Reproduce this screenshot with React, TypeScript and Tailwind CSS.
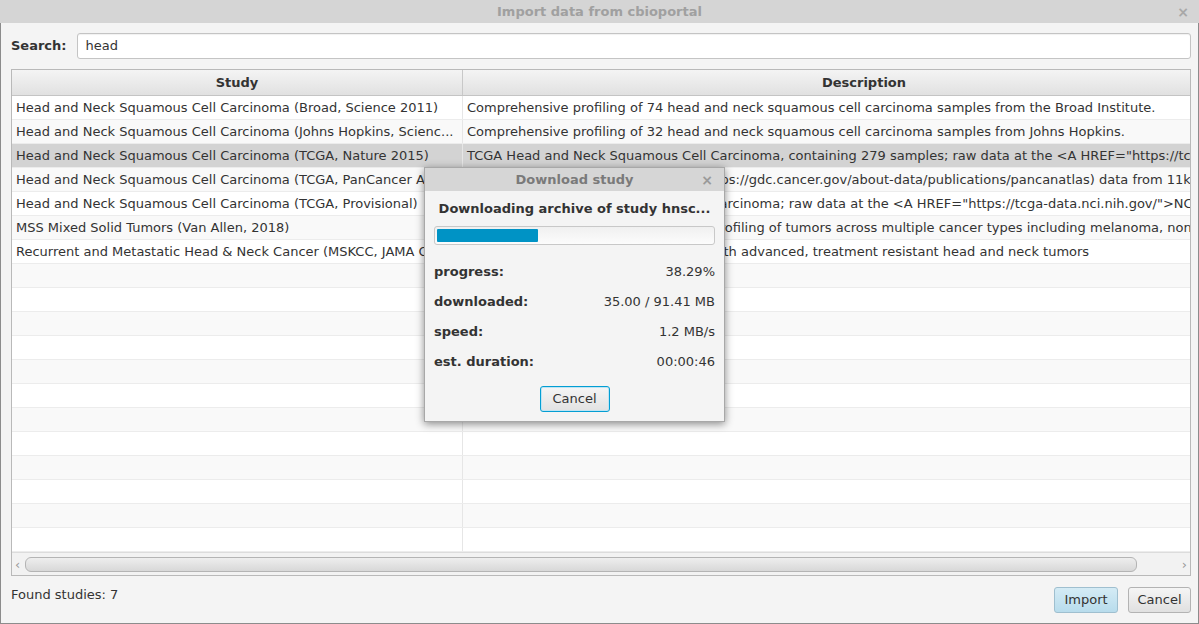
import React from 'react'

const STUDIES = [
  {
    name: 'Head and Neck Squamous Cell Carcinoma (Broad, Science 2011)',
    desc: 'Comprehensive profiling of 74 head and neck squamous cell carcinoma samples from the Broad Institute.',
  },
  {
    name: 'Head and Neck Squamous Cell Carcinoma (Johns Hopkins, Scienc...',
    desc: 'Comprehensive profiling of 32 head and neck squamous cell carcinoma samples from Johns Hopkins.',
  },
  {
    name: 'Head and Neck Squamous Cell Carcinoma (TCGA, Nature 2015)',
    desc: 'TCGA Head and Neck Squamous Cell Carcinoma, containing 279 samples; raw data at the <A HREF="https://tcga-data.nci.nih.gov/">NCI</A>.',
  },
  {
    name: 'Head and Neck Squamous Cell Carcinoma (TCGA, PanCancer Atlas)',
    desc: 'Comprehensive TCGA PanCanAtlas (https://gdc.cancer.gov/about-data/publications/pancanatlas) data from 11k samples.',
  },
  {
    name: 'Head and Neck Squamous Cell Carcinoma (TCGA, Provisional)',
    desc: 'TCGA Head and Neck Squamous Cell Carcinoma; raw data at the <A HREF="https://tcga-data.nci.nih.gov/">NCI</A>.',
  },
  {
    name: 'MSS Mixed Solid Tumors (Van Allen, 2018)',
    desc: 'Whole exome sequencing and mRNA profiling of tumors across multiple cancer types including melanoma, non-small cell lung cancer.',
  },
  {
    name: 'Recurrent and Metastatic Head & Neck Cancer (MSKCC, JAMA Oncol 2016)',
    desc: 'Targeted sequencing of 151 patients with advanced, treatment resistant head and neck tumors',
  },
]

const EMPTY_ROWS = 12

const font = "font-['DejaVu_Sans','Open_Sans',sans-serif]"

function Row({ index, name, desc }: { index: number; name?: string; desc?: string }) {
  const selected = index === 2
  const bg = selected ? 'bg-[#d3d3d3]' : index % 2 === 0 ? 'bg-white' : 'bg-[#f9f9f9]'
  return (
    <div className={`flex h-6 shrink-0 border-b border-[#ececec] ${bg}`}>
      <div className="w-[451px] shrink-0 truncate border-r border-[#e6e6e6] pl-[4px] leading-[23px] whitespace-nowrap">
        {name}
      </div>
      <div className="w-[802px] shrink-0 overflow-hidden pl-[4px] leading-[23px] whitespace-nowrap">{desc}</div>
    </div>
  )
}

function DownloadDialog() {
  const stats = [
    ['progress:', '38.29%'],
    ['downloaded:', '35.00 / 91.41 MB'],
    ['speed:', '1.2 MB/s'],
    ['est. duration:', '00:00:46'],
  ]
  return (
    <div className="absolute left-[424px] top-[167px] flex w-[301px] flex-col border border-[#a8a8a8] bg-[#f4f4f4] shadow-[0_2px_8px_rgba(0,0,0,0.45)]">
      <div className="relative flex h-[23px] items-center justify-center bg-[#d6d6d6]">
        <span className="text-[13px] font-bold text-[#7a7a7a]">Download study</span>
        <span className="absolute right-[11px] top-[2px] text-[14px] font-bold text-[#9a9a9a]">×</span>
      </div>
      <div className="flex flex-col px-[9px] pt-[8px] pb-[9px]">
        <div className="text-center text-[13px] font-bold whitespace-nowrap text-[#333]">Downloading archive of study hnsc...</div>
        <div className="mt-[7px] h-[19px] rounded-[3px] border border-[#c8c8c8] bg-gradient-to-b from-[#f0f0f0] to-[#fcfcfc] p-[2px]">
          <div className="h-full w-[36.9%] rounded-[1px] bg-[#0093c5]" />
        </div>
        <div className="mt-[18px] flex flex-col gap-[12px]">
          {stats.map(([k, v]) => (
            <div key={k} className="flex h-[18px] items-center justify-between text-[13px] text-[#333]">
              <span className="font-bold">{k}</span>
              <span>{v}</span>
            </div>
          ))}
        </div>
        <div className="mt-[15px] flex justify-center">
          <button className="h-[26px] w-[70px] rounded-[3px] border border-[#039ed3] bg-gradient-to-b from-[#f5f5f5] to-[#e2e2e2] text-[13px] text-[#333] shadow-[inset_0_0_0_1px_#bfe4f3]">
            Cancel
          </button>
        </div>
      </div>
    </div>
  )
}

export default function App() {
  return (
    <div className={`relative flex h-[624px] w-[1199px] flex-col overflow-hidden bg-[#f4f4f4] text-[13px] text-[#333] ${font}`}>
      <div className="relative flex h-[23px] shrink-0 items-center justify-center bg-[#d5d5d5]">
        <span className="text-[13px] font-bold text-[#a0a0a0]">Import data from cbioportal</span>
        <span className="absolute right-[10px] top-[2px] text-[14px] font-bold text-[#a8a8a8]">×</span>
      </div>
      <div className="flex flex-1 flex-col border-x border-b border-[#8c8c8c] pl-[10px] pr-[7px] pb-[9px]">
        <div className="mt-[10px] flex items-center gap-[10px]">
          <span className="font-bold">Search:</span>
          <div className="flex h-[26px] flex-1 items-center rounded-[3px] border border-[#c4c4c4] bg-white pl-[8px] shadow-[inset_0_1px_1px_rgba(0,0,0,0.06)]">
            head
          </div>
        </div>
        <div className="mt-[10px] flex h-[507px] flex-col overflow-hidden border border-[#b9b9b9] bg-white">
          <div className="flex h-[26px] shrink-0 border-b border-[#c4c4c4] bg-gradient-to-b from-[#f4f4f4] to-[#e1e1e1] font-bold">
            <div className="flex w-[451px] shrink-0 items-center justify-center border-r border-[#c8c8c8]">Study</div>
            <div className="flex w-[802px] shrink-0 items-center justify-center">Description</div>
          </div>
          <div className="flex flex-1 flex-col overflow-hidden">
            {STUDIES.map((s, i) => (
              <Row key={i} index={i} name={s.name} desc={s.desc} />
            ))}
            {Array.from({ length: EMPTY_ROWS }).map((_, i) => (
              <Row key={`e${i}`} index={i + STUDIES.length} />
            ))}
          </div>
          <div className="flex h-[23px] shrink-0 items-center border-t border-[#dcdcdc] bg-[#f2f2f2] px-[3px]">
            <span className="w-[9px] text-[13px] leading-none text-[#999]">‹</span>
            <div className="ml-[1px] h-[15px] w-[1112px] rounded-[6px] border border-[#b4b4b4] bg-gradient-to-b from-[#eeeeee] to-[#d8d8d8]" />
            <div className="flex-1" />
            <span className="w-[11px] text-right text-[13px] leading-none text-[#999]">›</span>
          </div>
        </div>
        <div className="mt-[10px] flex items-start justify-between">
          <span className="-mt-px">Found studies: 7</span>
          <div className="mt-[1px] flex gap-[10px]">
            <button className="h-[26px] w-[64px] rounded-[3px] border border-[#9fbfcf] bg-gradient-to-b from-[#d4ebf5] to-[#b8dcec] text-[#333]">
              Import
            </button>
            <button className="h-[26px] w-[63px] rounded-[3px] border border-[#b3b3b3] bg-gradient-to-b from-[#f5f5f5] to-[#e0e0e0] text-[#333]">
              Cancel
            </button>
          </div>
        </div>
      </div>
      <DownloadDialog />
    </div>
  )
}
